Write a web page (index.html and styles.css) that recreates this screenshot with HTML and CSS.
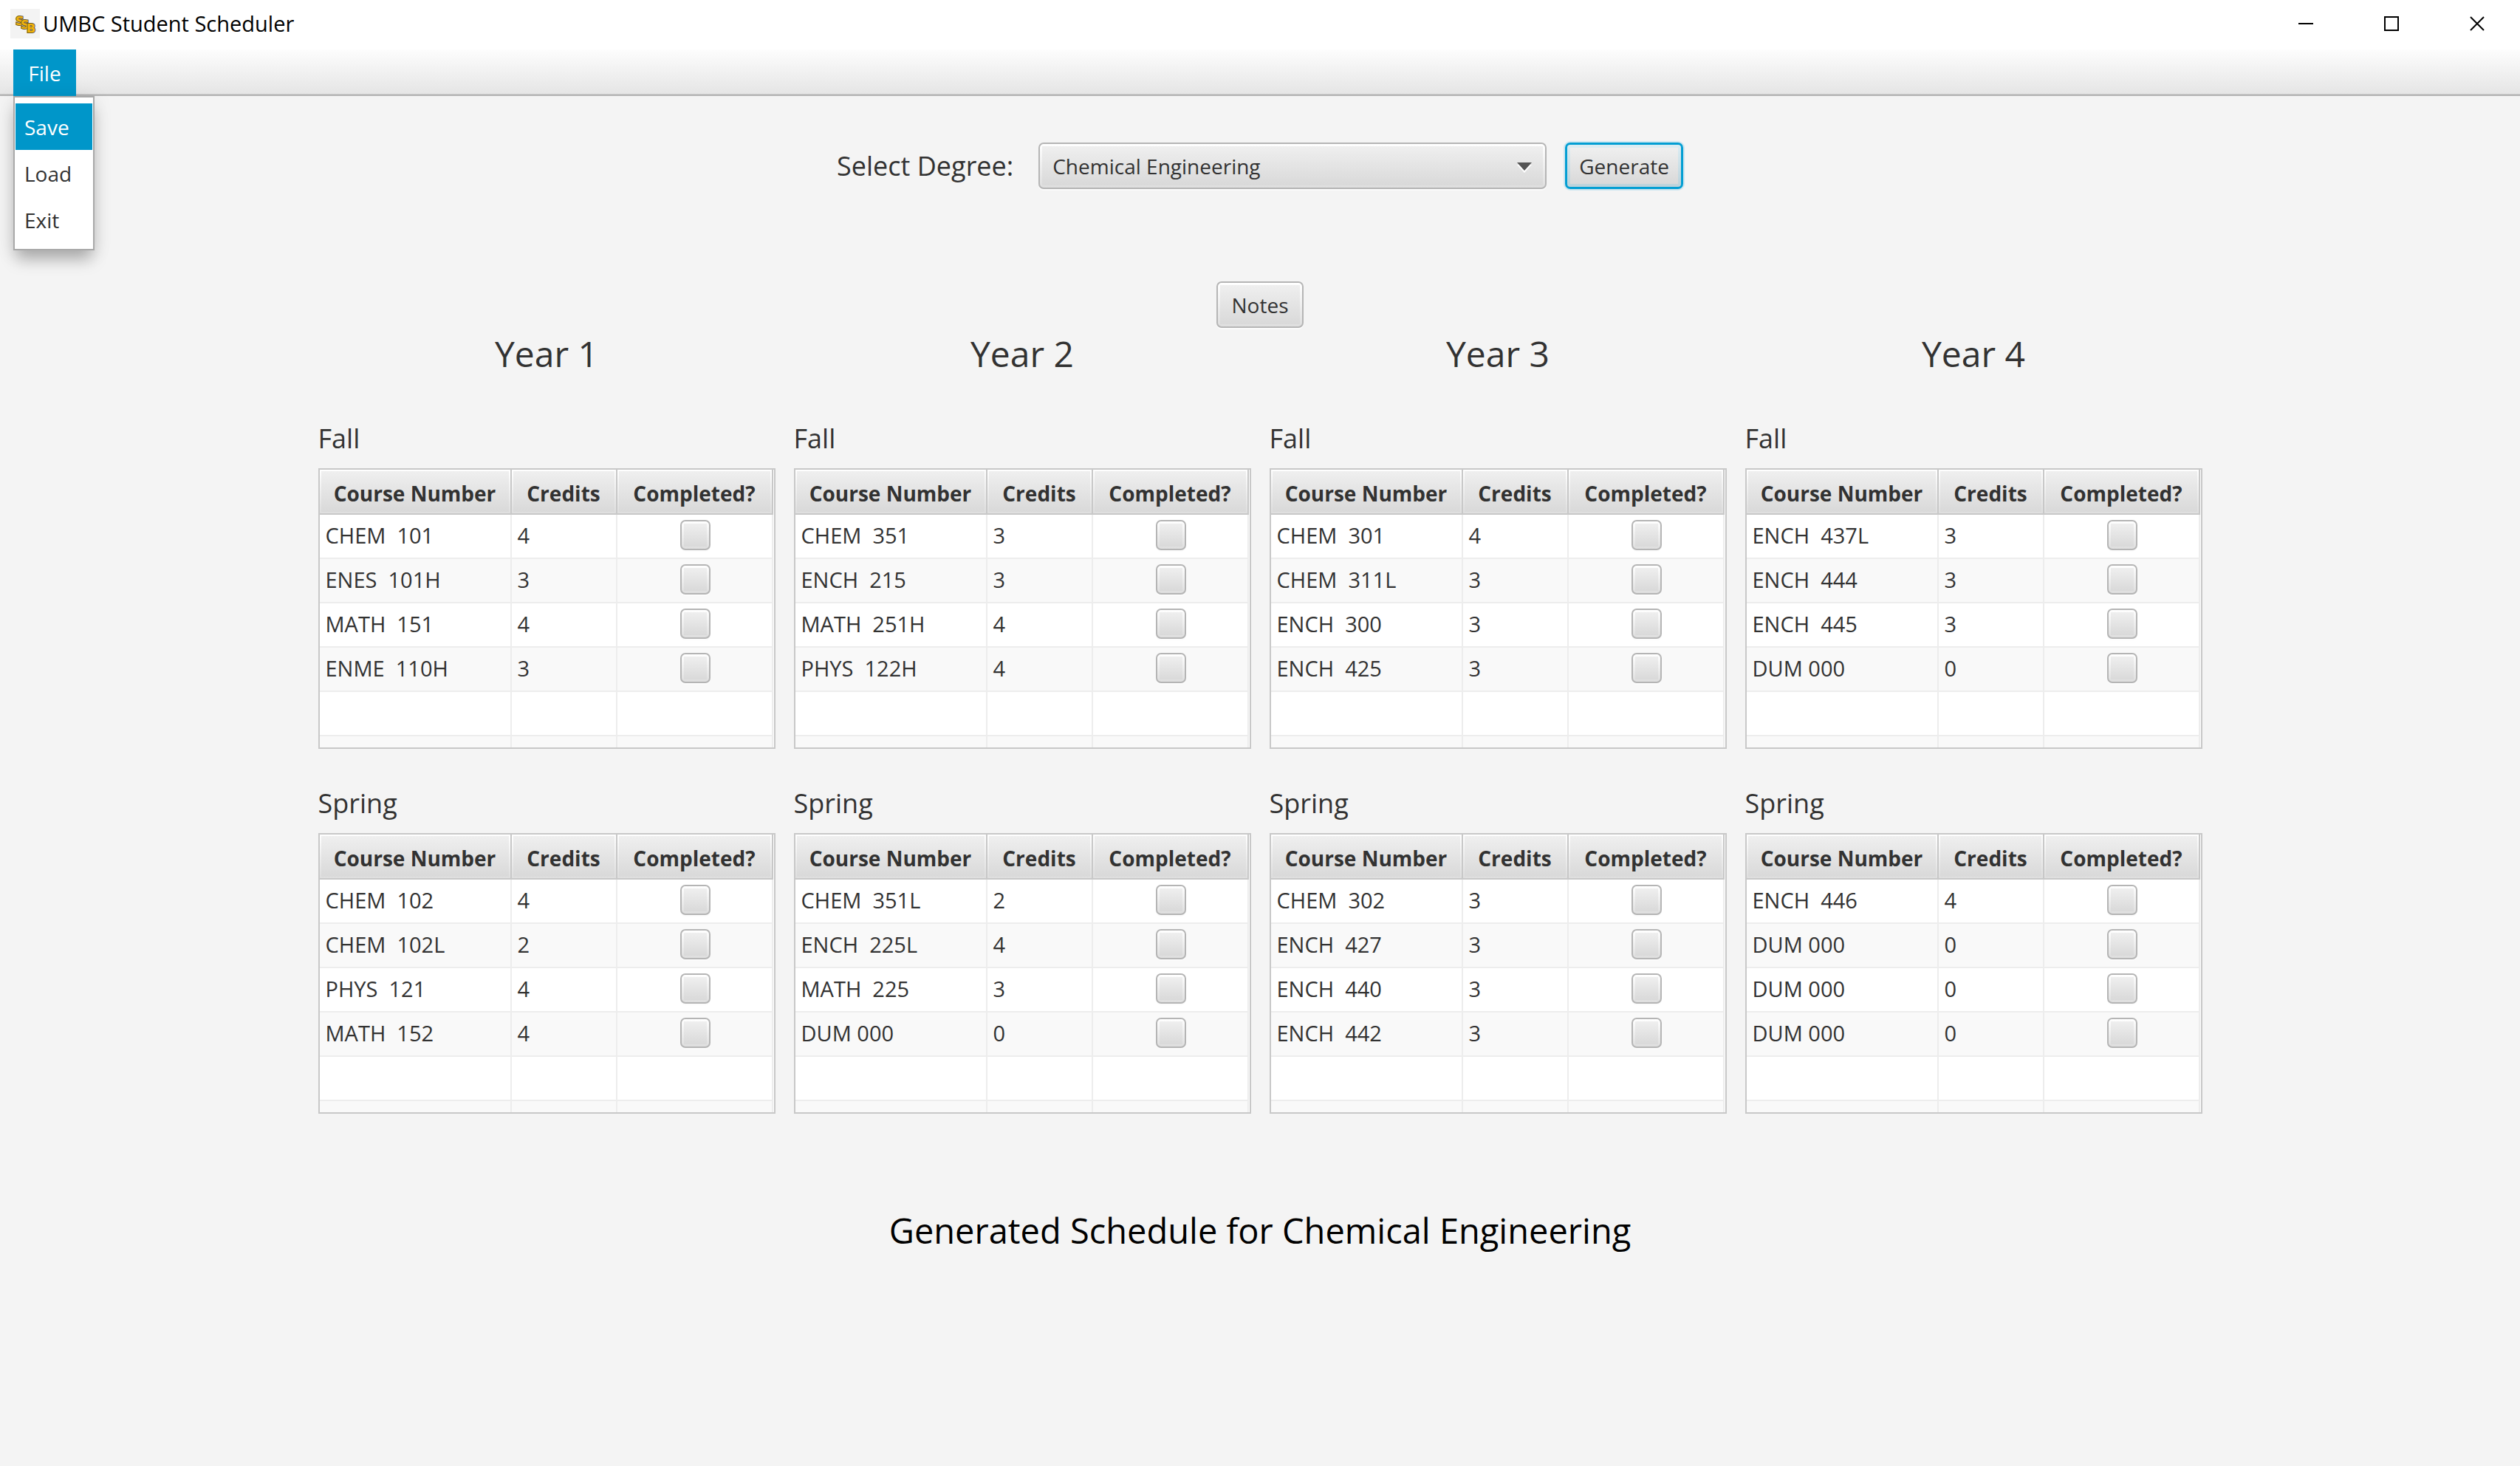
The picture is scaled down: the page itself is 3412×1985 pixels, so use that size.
FILE: index.html
```html
<!DOCTYPE html>
<html lang="en">
<head>
<meta charset="utf-8">
<title>UMBC Student Scheduler</title>
<link rel="stylesheet" href="styles.css">
</head>
<body>
<header class="titlebar">
  <svg class="app-icon" viewBox="0 0 40 40" aria-hidden="true">
    <rect width="40" height="40" fill="#f3f3f3"/>
    <g class="app-letters">
      <text x="7" y="22">S</text>
      <text x="14" y="27">S</text>
      <text x="22" y="32">B</text>
    </g>
  </svg>
  <h1 class="app-title">UMBC Student Scheduler</h1>
  <div class="window-buttons">
    <button class="window-button" type="button" aria-label="Minimize"><svg width="20" height="20" viewBox="0 0 20 20"><path d="M0 10H20" stroke="#000" stroke-width="2"/></svg></button>
    <button class="window-button" type="button" aria-label="Maximize"><svg width="20" height="20" viewBox="0 0 20 20"><rect x="1" y="1" width="18" height="18" fill="none" stroke="#000" stroke-width="2"/></svg></button>
    <button class="window-button" type="button" aria-label="Close"><svg width="20" height="20" viewBox="0 0 20 20"><path d="M1 1L19 19M19 1L1 19" stroke="#000" stroke-width="2"/></svg></button>
  </div>
</header>

<nav class="menubar">
  <div class="menu">
    <button class="menu-title" type="button" aria-haspopup="true" aria-expanded="true">File</button>
    <div class="menu-popup" role="menu">
      <button class="menu-item selected" type="button" role="menuitem">Save</button>
      <button class="menu-item" type="button" role="menuitem">Load</button>
      <button class="menu-item" type="button" role="menuitem">Exit</button>
    </div>
  </div>
</nav>

<main class="content">
  <form class="degree-form">
    <label class="degree-label" for="degree">Select Degree:</label>
    <div class="combo">
      <select class="combo-select" id="degree"><option>Chemical Engineering</option></select>
      <svg class="combo-arrow" width="20" height="14" viewBox="0 0 20 14" aria-hidden="true"><path d="M0 3H20L10 14Z" fill="#fff"/><path d="M0 0H20L10 11Z" fill="#555"/></svg>
    </div>
    <button class="button focused" type="button">Generate</button>
  </form>
  <button class="button notes" type="button">Notes</button>

  <div class="years">
    <section class="year">
      <h2 class="year-title">Year 1</h2>
      <h3 class="term-title">Fall</h3>
      <div class="table-frame">
        <table class="courses">
          <thead><tr><th class="col-course">Course Number</th><th class="col-credits">Credits</th><th>Completed?</th></tr></thead>
          <tbody>
            <tr><td>CHEM  101</td><td>4</td><td class="done"><input type="checkbox" aria-label="CHEM 101 completed"></td></tr>
            <tr><td>ENES  101H</td><td>3</td><td class="done"><input type="checkbox" aria-label="ENES 101H completed"></td></tr>
            <tr><td>MATH  151</td><td>4</td><td class="done"><input type="checkbox" aria-label="MATH 151 completed"></td></tr>
            <tr><td>ENME  110H</td><td>3</td><td class="done"><input type="checkbox" aria-label="ENME 110H completed"></td></tr>
            <tr><td></td><td></td><td></td></tr>
            <tr class="cut"><td></td><td></td><td></td></tr>
          </tbody>
        </table>
      </div>
      <h3 class="term-title">Spring</h3>
      <div class="table-frame">
        <table class="courses">
          <thead><tr><th class="col-course">Course Number</th><th class="col-credits">Credits</th><th>Completed?</th></tr></thead>
          <tbody>
            <tr><td>CHEM  102</td><td>4</td><td class="done"><input type="checkbox" aria-label="CHEM 102 completed"></td></tr>
            <tr><td>CHEM  102L</td><td>2</td><td class="done"><input type="checkbox" aria-label="CHEM 102L completed"></td></tr>
            <tr><td>PHYS  121</td><td>4</td><td class="done"><input type="checkbox" aria-label="PHYS 121 completed"></td></tr>
            <tr><td>MATH  152</td><td>4</td><td class="done"><input type="checkbox" aria-label="MATH 152 completed"></td></tr>
            <tr><td></td><td></td><td></td></tr>
            <tr class="cut"><td></td><td></td><td></td></tr>
          </tbody>
        </table>
      </div>
    </section>

    <section class="year">
      <h2 class="year-title">Year 2</h2>
      <h3 class="term-title">Fall</h3>
      <div class="table-frame">
        <table class="courses">
          <thead><tr><th class="col-course">Course Number</th><th class="col-credits">Credits</th><th>Completed?</th></tr></thead>
          <tbody>
            <tr><td>CHEM  351</td><td>3</td><td class="done"><input type="checkbox" aria-label="CHEM 351 completed"></td></tr>
            <tr><td>ENCH  215</td><td>3</td><td class="done"><input type="checkbox" aria-label="ENCH 215 completed"></td></tr>
            <tr><td>MATH  251H</td><td>4</td><td class="done"><input type="checkbox" aria-label="MATH 251H completed"></td></tr>
            <tr><td>PHYS  122H</td><td>4</td><td class="done"><input type="checkbox" aria-label="PHYS 122H completed"></td></tr>
            <tr><td></td><td></td><td></td></tr>
            <tr class="cut"><td></td><td></td><td></td></tr>
          </tbody>
        </table>
      </div>
      <h3 class="term-title">Spring</h3>
      <div class="table-frame">
        <table class="courses">
          <thead><tr><th class="col-course">Course Number</th><th class="col-credits">Credits</th><th>Completed?</th></tr></thead>
          <tbody>
            <tr><td>CHEM  351L</td><td>2</td><td class="done"><input type="checkbox" aria-label="CHEM 351L completed"></td></tr>
            <tr><td>ENCH  225L</td><td>4</td><td class="done"><input type="checkbox" aria-label="ENCH 225L completed"></td></tr>
            <tr><td>MATH  225</td><td>3</td><td class="done"><input type="checkbox" aria-label="MATH 225 completed"></td></tr>
            <tr><td>DUM 000</td><td>0</td><td class="done"><input type="checkbox" aria-label="DUM 000 completed"></td></tr>
            <tr><td></td><td></td><td></td></tr>
            <tr class="cut"><td></td><td></td><td></td></tr>
          </tbody>
        </table>
      </div>
    </section>

    <section class="year">
      <h2 class="year-title">Year 3</h2>
      <h3 class="term-title">Fall</h3>
      <div class="table-frame">
        <table class="courses">
          <thead><tr><th class="col-course">Course Number</th><th class="col-credits">Credits</th><th>Completed?</th></tr></thead>
          <tbody>
            <tr><td>CHEM  301</td><td>4</td><td class="done"><input type="checkbox" aria-label="CHEM 301 completed"></td></tr>
            <tr><td>CHEM  311L</td><td>3</td><td class="done"><input type="checkbox" aria-label="CHEM 311L completed"></td></tr>
            <tr><td>ENCH  300</td><td>3</td><td class="done"><input type="checkbox" aria-label="ENCH 300 completed"></td></tr>
            <tr><td>ENCH  425</td><td>3</td><td class="done"><input type="checkbox" aria-label="ENCH 425 completed"></td></tr>
            <tr><td></td><td></td><td></td></tr>
            <tr class="cut"><td></td><td></td><td></td></tr>
          </tbody>
        </table>
      </div>
      <h3 class="term-title">Spring</h3>
      <div class="table-frame">
        <table class="courses">
          <thead><tr><th class="col-course">Course Number</th><th class="col-credits">Credits</th><th>Completed?</th></tr></thead>
          <tbody>
            <tr><td>CHEM  302</td><td>3</td><td class="done"><input type="checkbox" aria-label="CHEM 302 completed"></td></tr>
            <tr><td>ENCH  427</td><td>3</td><td class="done"><input type="checkbox" aria-label="ENCH 427 completed"></td></tr>
            <tr><td>ENCH  440</td><td>3</td><td class="done"><input type="checkbox" aria-label="ENCH 440 completed"></td></tr>
            <tr><td>ENCH  442</td><td>3</td><td class="done"><input type="checkbox" aria-label="ENCH 442 completed"></td></tr>
            <tr><td></td><td></td><td></td></tr>
            <tr class="cut"><td></td><td></td><td></td></tr>
          </tbody>
        </table>
      </div>
    </section>

    <section class="year">
      <h2 class="year-title">Year 4</h2>
      <h3 class="term-title">Fall</h3>
      <div class="table-frame">
        <table class="courses">
          <thead><tr><th class="col-course">Course Number</th><th class="col-credits">Credits</th><th>Completed?</th></tr></thead>
          <tbody>
            <tr><td>ENCH  437L</td><td>3</td><td class="done"><input type="checkbox" aria-label="ENCH 437L completed"></td></tr>
            <tr><td>ENCH  444</td><td>3</td><td class="done"><input type="checkbox" aria-label="ENCH 444 completed"></td></tr>
            <tr><td>ENCH  445</td><td>3</td><td class="done"><input type="checkbox" aria-label="ENCH 445 completed"></td></tr>
            <tr><td>DUM 000</td><td>0</td><td class="done"><input type="checkbox" aria-label="DUM 000 completed"></td></tr>
            <tr><td></td><td></td><td></td></tr>
            <tr class="cut"><td></td><td></td><td></td></tr>
          </tbody>
        </table>
      </div>
      <h3 class="term-title">Spring</h3>
      <div class="table-frame">
        <table class="courses">
          <thead><tr><th class="col-course">Course Number</th><th class="col-credits">Credits</th><th>Completed?</th></tr></thead>
          <tbody>
            <tr><td>ENCH  446</td><td>4</td><td class="done"><input type="checkbox" aria-label="ENCH 446 completed"></td></tr>
            <tr><td>DUM 000</td><td>0</td><td class="done"><input type="checkbox" aria-label="DUM 000 completed"></td></tr>
            <tr><td>DUM 000</td><td>0</td><td class="done"><input type="checkbox" aria-label="DUM 000 completed"></td></tr>
            <tr><td>DUM 000</td><td>0</td><td class="done"><input type="checkbox" aria-label="DUM 000 completed"></td></tr>
            <tr><td></td><td></td><td></td></tr>
            <tr class="cut"><td></td><td></td><td></td></tr>
          </tbody>
        </table>
      </div>
    </section>
  </div>

  <p class="status">Generated Schedule for Chemical Engineering</p>
</main>
</body>
</html>
```
FILE: styles.css
```css
* {
  box-sizing: border-box;
}

body {
  margin: 0;
  min-height: 100vh;
  background: #f4f4f4;
  color: #323232;
  font: 28px/40px "Open Sans", "Noto Sans", sans-serif;
}

button,
select {
  font: inherit;
  color: inherit;
}

h1,
h2,
h3,
p {
  margin: 0;
  font-weight: 400;
}

/* Window title bar */
.titlebar {
  display: flex;
  align-items: center;
  gap: 4px;
  height: 67px;
  padding: 0 0 4px 14px;
  background: #fff;
}

.app-icon {
  width: 40px;
  height: 40px;
}

.app-letters {
  font: bold 16px "DejaVu Sans", sans-serif;
  fill: #f2b40c;
  stroke: #6b5a2a;
  stroke-width: 2px;
  paint-order: stroke;
}

.app-title {
  font-size: 29px;
  line-height: 40px;
  color: #000;
}

.window-buttons {
  display: flex;
  margin-left: auto;
}

.window-button {
  display: grid;
  place-items: center;
  width: 116px;
  height: 62px;
  padding: 0;
  border: 0;
  background: none;
}

/* Menu bar */
.menubar {
  display: flex;
  height: 63px;
  padding-left: 18px;
  background: linear-gradient(#fdfdfd, #e4e4e4);
  box-shadow: inset 0 -2px #b4b4b4, inset 0 -3px #cbcbcb;
}

.menu {
  position: relative;
}

.menu-title {
  width: 85px;
  height: 63px;
  padding: 0;
  border: 0;
  background: #0096c9;
  color: #fff;
}

.menu-popup {
  position: absolute;
  top: 100%;
  left: 0;
  z-index: 1;
  width: 110px;
  padding: 8px 1px;
  border: 2px solid #a9a9a9;
  background: #fff;
  box-shadow: 0 16px 20px -4px rgba(0, 0, 0, 0.26), 0 4px 24px rgba(0, 0, 0, 0.1);
}

.menu-item {
  display: block;
  width: 100%;
  height: 63px;
  padding: 0 12px;
  border: 0;
  background: none;
  text-align: left;
}

.menu-item.selected {
  background: #0096c9;
  color: #fff;
}

/* Main area */
.content {
  display: flex;
  flex-direction: column;
  align-items: center;
  padding: 63px 24px;
}

.degree-form {
  display: flex;
  align-items: center;
  gap: 25px;
}

.degree-label {
  padding-right: 9px;
  font-size: 36px;
  line-height: 50px;
}

.button,
.combo-select,
.done input {
  border: 2px solid #b5b5b5;
  border-radius: 7px;
  background:
    linear-gradient(#efefef, #d9d9d9) center / calc(100% - 6px) calc(100% - 6px) no-repeat,
    linear-gradient(#fff, #dedede);
  box-shadow: 0 2px #fcfcfc;
}

.button {
  height: 63px;
  padding: 0 19px;
}

.button.focused {
  padding: 0 16px;
  border: 3px solid #039ed3;
  background:
    linear-gradient(#efefef, #d9d9d9) center / calc(100% - 8px) calc(100% - 8px) no-repeat,
    linear-gradient(#dcedf3, #bcd2da);
  box-shadow: 0 0 0 2px #d0e7f0;
}

.combo {
  position: relative;
}

.combo-select {
  display: block;
  width: 688px;
  height: 63px;
  padding: 0 60px 0 17px;
  appearance: none;
}

.combo-arrow {
  position: absolute;
  top: 27px;
  right: 20px;
  pointer-events: none;
}

.notes {
  margin-top: 125px;
}

.years {
  display: grid;
  grid-template-columns: repeat(4, minmax(0, 619px));
  justify-content: center;
  gap: 25px;
  width: 100%;
}

.year-title {
  margin-bottom: 55px;
  font-size: 48px;
  line-height: 70px;
  text-align: center;
}

.term-title {
  margin-bottom: 15px;
  font-size: 36px;
  line-height: 50px;
}

.table-frame + .term-title {
  margin-top: 49px;
}

.table-frame {
  padding-right: 1px;
  border: 2px solid #c8c8c8;
  background: #fff;
}

.courses {
  width: 100%;
  table-layout: fixed;
  border-spacing: 0;
}

.col-course {
  width: 260px;
}

.col-credits {
  width: 143px;
}

.courses th {
  height: 61px;
  padding: 4px 0 0;
  border: solid #c8c8c8;
  border-width: 0 2px 2px 0;
  background:
    linear-gradient(#efefef, #d9d9d9) center / calc(100% - 4px) calc(100% - 4px) no-repeat,
    linear-gradient(#fff, #dedede);
  font-weight: 700;
}

.courses td {
  height: 60px;
  padding: 0 8px 2px;
  border: solid #ededed;
  border-width: 0 2px 2px 0;
  font-size: 29px;
  white-space: pre;
}

.courses tr:nth-child(even) td {
  background: #f9f9f9;
}

.courses .cut td {
  height: 15px;
  padding: 0;
  border-bottom: 0;
}

.courses .done {
  padding: 0 0 3px 2px;
}

.done input {
  display: block;
  width: 41px;
  height: 41px;
  margin: 0 auto;
  appearance: none;
}

.status {
  margin-top: 124px;
  font-size: 47px;
  line-height: 68px;
  color: #000;
}
```
